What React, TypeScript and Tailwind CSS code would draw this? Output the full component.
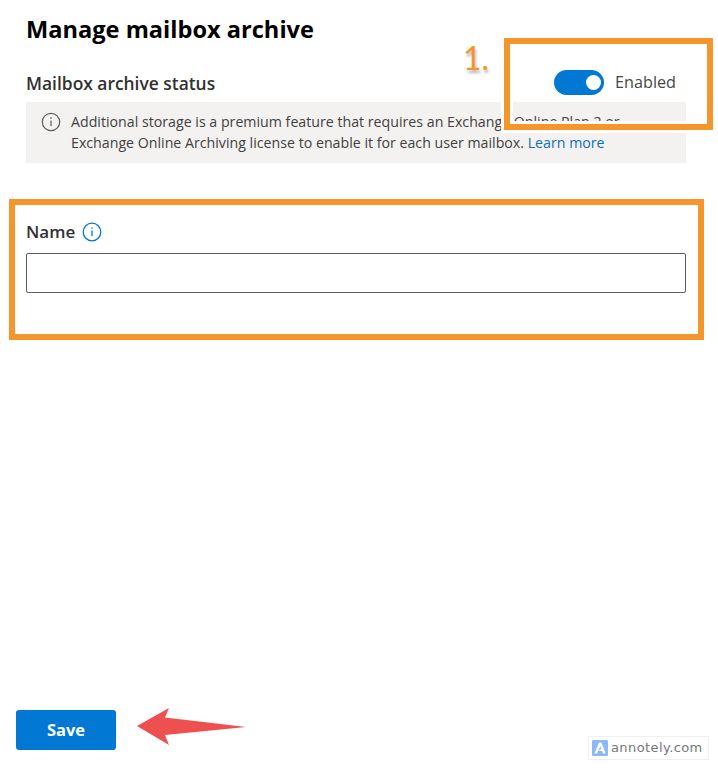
export default function App() {
  return (
    <div className="relative flex h-[770px] w-[718px] flex-col overflow-hidden bg-white font-['Open_Sans',sans-serif] text-[#323130]">
      <div className="pl-[26px] pr-[32px]">
        <h1 className="pt-[12px] text-[23.6px] leading-[34px] font-bold text-black">Manage mailbox archive</h1>
        <div className="mt-[21px] flex h-[31px] items-center justify-between pr-[10px]">
          <span className="pt-[2px] text-[17.4px] font-semibold">Mailbox archive status</span>
          <div className="flex items-center gap-[11px]">
            <div className="flex h-[25px] w-[50px] items-center justify-end rounded-full bg-[#0078d4] pr-[3px]">
              <div className="h-[15px] w-[15px] rounded-full bg-white" />
            </div>
            <span className="text-[16.2px] text-[#484644]">Enabled</span>
          </div>
        </div>
        <div className="mt-[4px] flex h-[61px] bg-[#f3f2f1] pl-[15px] pt-[9px] text-[#424140]">
          <svg width="20" height="20" viewBox="0 0 20 20" fill="none" stroke="#605e5c" className="mt-[1px] shrink-0">
            <circle cx="10" cy="10" r="8.7" strokeWidth="1.2" />
            <path d="M10 8.6v5.4" strokeWidth="1.2" />
            <circle cx="10" cy="6.1" r="0.8" fill="#605e5c" stroke="none" />
          </svg>
          <p className="ml-[10px] text-[14.2px] leading-[21px]">
            Additional storage is a premium feature that requires an Exchange Online Plan 2 or
            <br />
            Exchange Online Archiving license to enable it for each user mailbox.{" "}
            <span className="text-[#106ebe]">Learn more</span>
          </p>
        </div>
      </div>

      <div className="mt-[36px] ml-[9px] h-[141px] w-[695px] border-[6px] border-[#f4962c] pl-[11px] pr-[10px] pt-[15px]">
        <div className="flex h-[24px] items-center gap-[7px]">
          <span className="text-[17px] font-semibold">Name</span>
          <svg width="20" height="20" viewBox="0 0 20 20" fill="none" stroke="#0078d4">
            <circle cx="10" cy="10" r="8.8" strokeWidth="1.3" />
            <path d="M10 8.6v5.4" strokeWidth="1.3" />
            <circle cx="10" cy="6.1" r="0.8" fill="#0078d4" stroke="none" />
          </svg>
        </div>
        <div className="mt-[9px] h-[40px] w-[660px] rounded-[2px] border border-[#605e5c]" />
      </div>

      <div className="mt-auto mb-[20px] flex h-[40px] items-start pl-[16px]">
        <button className="h-[40px] w-[100px] rounded-[3px] bg-[#0078d4] pt-[1px] text-[16.5px] font-bold text-white">Save</button>
        <svg width="112" height="40" viewBox="0 0 112 40" className="ml-[19px] -mt-[3px]">
          <path d="M2 17 34 -1 30 8.500 111 18 30 26 34 36Z" fill="#ee5050" transform="translate(0 2)" />
        </svg>
      </div>

      {/* annotation: rectangle round the toggle */}
      <div className="absolute left-[501px] top-[35px] h-[98px] w-[215px] border-[3px] border-white">
        <div className="h-full w-full border-[6px] border-[#f4962c]">
          <div className="h-full w-full border-b-[3px] border-l-[3px] border-white" />
        </div>
      </div>
      <span className="absolute left-[463px] top-[38px] font-['Lato',sans-serif] text-[32px] leading-[40px] text-[#f4962c] [text-shadow:1px_3px_3px_#b5b5b5,-2px_-1px_1px_#fff,2px_1px_1px_#fff]">1.</span>

      {/* watermark */}
      <div className="absolute left-[588px] top-[736px] flex h-[24px] w-[121px] items-center gap-[3px] border border-[#f1f1f1] bg-white pl-[3px]">
        <svg width="16" height="16" viewBox="0 0 16 16">
          <rect width="16" height="16" rx="1.5" fill="#8db8f7" />
          <path d="M2.500 13.500 7 2.500h2.500l4 11h-2.500l-.8-2.500H6.500l2.800-2-.9-2.800L5 13.500Z" fill="#fff" />
        </svg>
        <span className="font-['DejaVu_Sans',sans-serif] text-[13px] tracking-[0.4px] text-[#77777b]">annotely.com</span>
      </div>
    </div>
  );
}
